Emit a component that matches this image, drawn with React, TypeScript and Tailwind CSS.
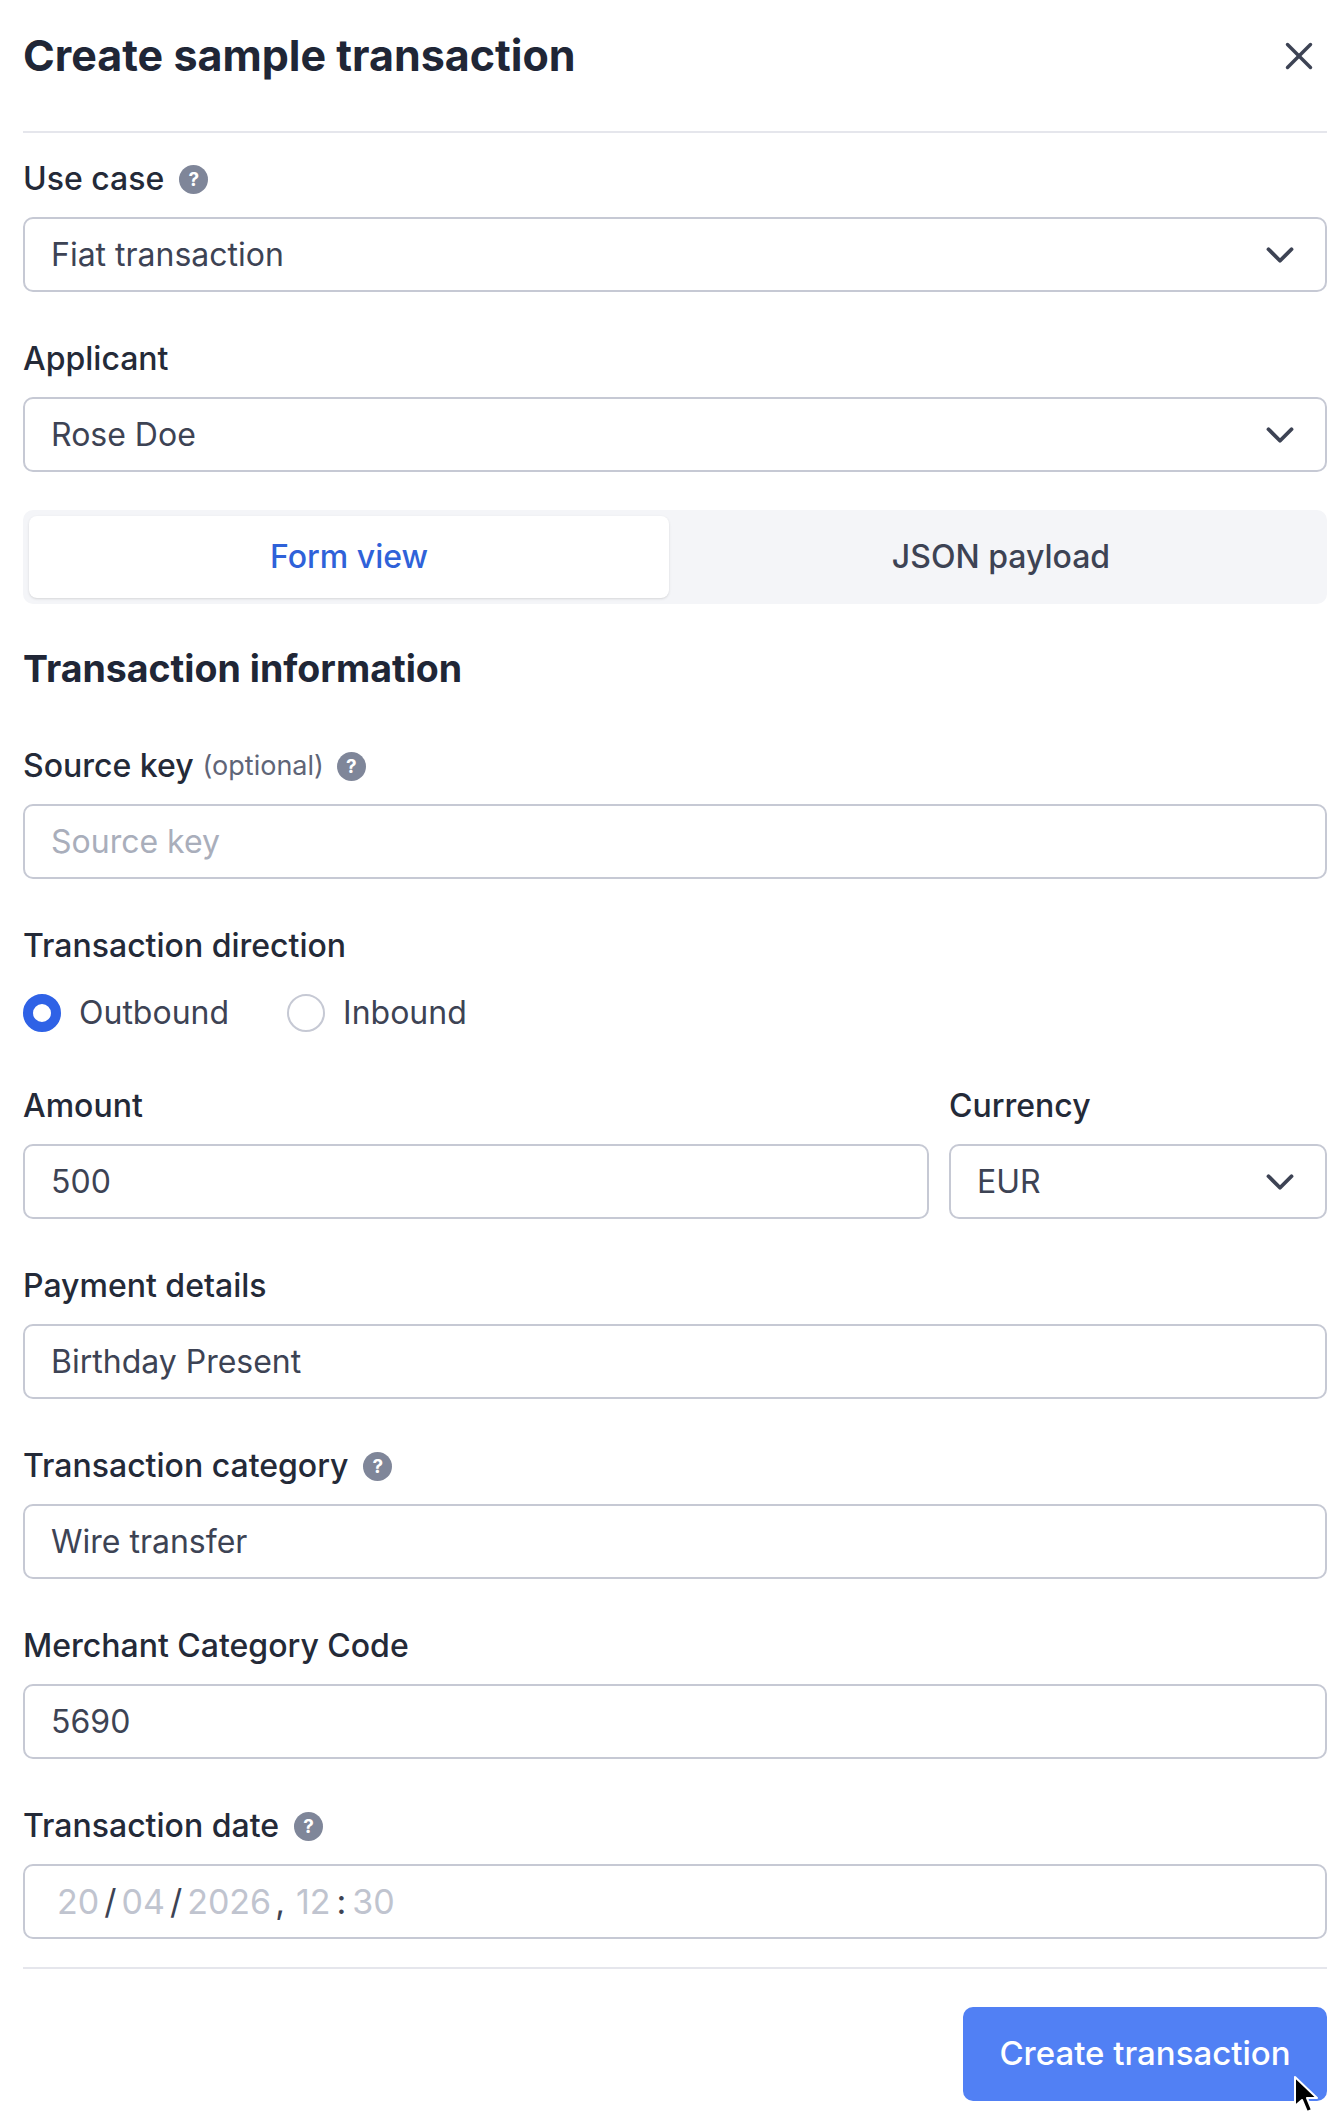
import { ChevronDown, X } from "lucide-react";
import { ReactNode } from "react";

function Help({ className = "ml-[15px]" }: { className?: string }) {
  return (
    <span className={`inline-flex size-[29px] items-center justify-center rounded-full bg-[#7f8699] text-[19px] font-bold leading-none text-white ${className}`}>
      ?
    </span>
  );
}

function Label({ children, help, className = "" }: { children: ReactNode; help?: boolean; className?: string }) {
  return (
    <div className={`mb-[18px] flex h-[40px] items-center text-[32px] font-medium text-[#242a38] ${className}`}>
      {children}
      {help && <Help />}
    </div>
  );
}

function Box({ children, className = "" }: { children: ReactNode; className?: string }) {
  return (
    <div className={`flex h-[75px] items-center justify-between rounded-[10px] border-2 border-[#c6c9d4] bg-white pl-[26px] pr-[22px] text-[32px] text-[#3d4354] ${className}`}>
      {children}
    </div>
  );
}

function Select({ value }: { value: string }) {
  return (
    <Box>
      <span>{value}</span>
      <ChevronDown className="size-[46px] text-[#3d4354]" strokeWidth={2} />
    </Box>
  );
}

function TextField({ label, value, help }: { label: string; value: string; help?: boolean }) {
  return (
    <div className="mb-[47px]">
      <Label help={help}>{label}</Label>
      <Box>{value}</Box>
    </div>
  );
}

function Radio({ label, checked }: { label: string; checked?: boolean }) {
  return (
    <div className="flex items-center gap-[18px] text-[32px] text-[#3d4354]">
      {checked ? (
        <span className="size-[38px] rounded-full border-[10px] border-[#2f62e6] bg-white" />
      ) : (
        <span className="size-[38px] rounded-full border-2 border-[#c6c9d4] bg-white" />
      )}
      {label}
    </div>
  );
}

export default function App() {
  return (
    <div className="relative h-[2125px] w-[1340px] overflow-hidden bg-white pl-[23px] pr-[13px] font-['Inter',sans-serif]">
      <div className="flex h-[133px] items-center justify-between border-b-2 border-[#e5e6ec] pb-[20px]">
        <h1 className="text-[43px] font-bold text-[#202636]">Create sample transaction</h1>
        <X className="mr-[5px] size-[46px] text-[#3d4354]" strokeWidth={1.8} />
      </div>

      <div className="pt-[26px]">
        <div className="mb-[47px]">
          <Label help>Use case</Label>
          <Select value="Fiat transaction" />
        </div>
        <div className="mb-[38px]">
          <Label>Applicant</Label>
          <Select value="Rose Doe" />
        </div>

        <div className="flex h-[94px] rounded-[10px] bg-[#f4f5f8] py-[6px] pl-[6px] text-[32px] font-medium">
          <div className="flex w-[640px] items-center justify-center rounded-[8px] bg-white text-[#2f62d9] shadow-sm">Form view</div>
          <div className="ml-[6px] flex flex-1 items-center justify-center text-[#3d4354]">JSON payload</div>
        </div>

        <h2 className="mb-[54px] mt-[42px] h-[46px] text-[37.5px] font-bold leading-[46px] text-[#202636]">Transaction information</h2>

        <div className="mb-[47px]">
          <Label>
            Source key
            <span className="ml-[9px] text-[27px] font-normal text-[#5f6577]">(optional)</span>
            <Help className="ml-[13px]" />
          </Label>
          <Box className="text-[#a9aebb]">Source key</Box>
        </div>

        <Label className="mb-[27px]">Transaction direction</Label>
        <div className="mb-[53px] flex h-[40px] items-center gap-[58px]">
          <Radio label="Outbound" checked />
          <Radio label="Inbound" />
        </div>

        <div className="mb-[47px] flex gap-[20px]">
          <div className="flex-1">
            <Label>Amount</Label>
            <Box>500</Box>
          </div>
          <div className="w-[378px]">
            <Label>Currency</Label>
            <Select value="EUR" />
          </div>
        </div>

        <TextField label="Payment details" value="Birthday Present" />
        <TextField label="Transaction category" value="Wire transfer" help />
        <TextField label="Merchant Category Code" value="5690" />

        <div className="border-b-2 border-[#e5e6ec] pb-[28px]">
          <Label help>Transaction date</Label>
          <Box className="justify-start pl-[32px] text-[34px] text-[#c0c4cf]">
            <span>20</span>
            <span className="mx-[5px] text-[#3d4354]">/</span>
            <span>04</span>
            <span className="mx-[5px] text-[#3d4354]">/</span>
            <span>2026</span>
            <span className="ml-[4px] mr-[11px] text-[#3d4354]">,</span>
            <span>12</span>
            <span className="mx-[6px] text-[#3d4354]">:</span>
            <span>30</span>
          </Box>
        </div>

        <div className="mt-[38px] flex justify-end">
          <button className="h-[94px] w-[364px] rounded-[10px] bg-[#5180f4] text-[33px] font-medium text-white">Create transaction</button>
        </div>
      </div>

      {/* mouse pointer caught in the recording */}
      <svg className="absolute left-[1292px] top-[2075px]" width="30" height="44" viewBox="0 0 30 44">
        <path d="M3 2 L3 31 L10 25 L15 37 L20 35 L15 23 L25 23 Z" fill="#000" stroke="#fff" strokeWidth="2" strokeLinejoin="round" />
      </svg>
    </div>
  );
}
